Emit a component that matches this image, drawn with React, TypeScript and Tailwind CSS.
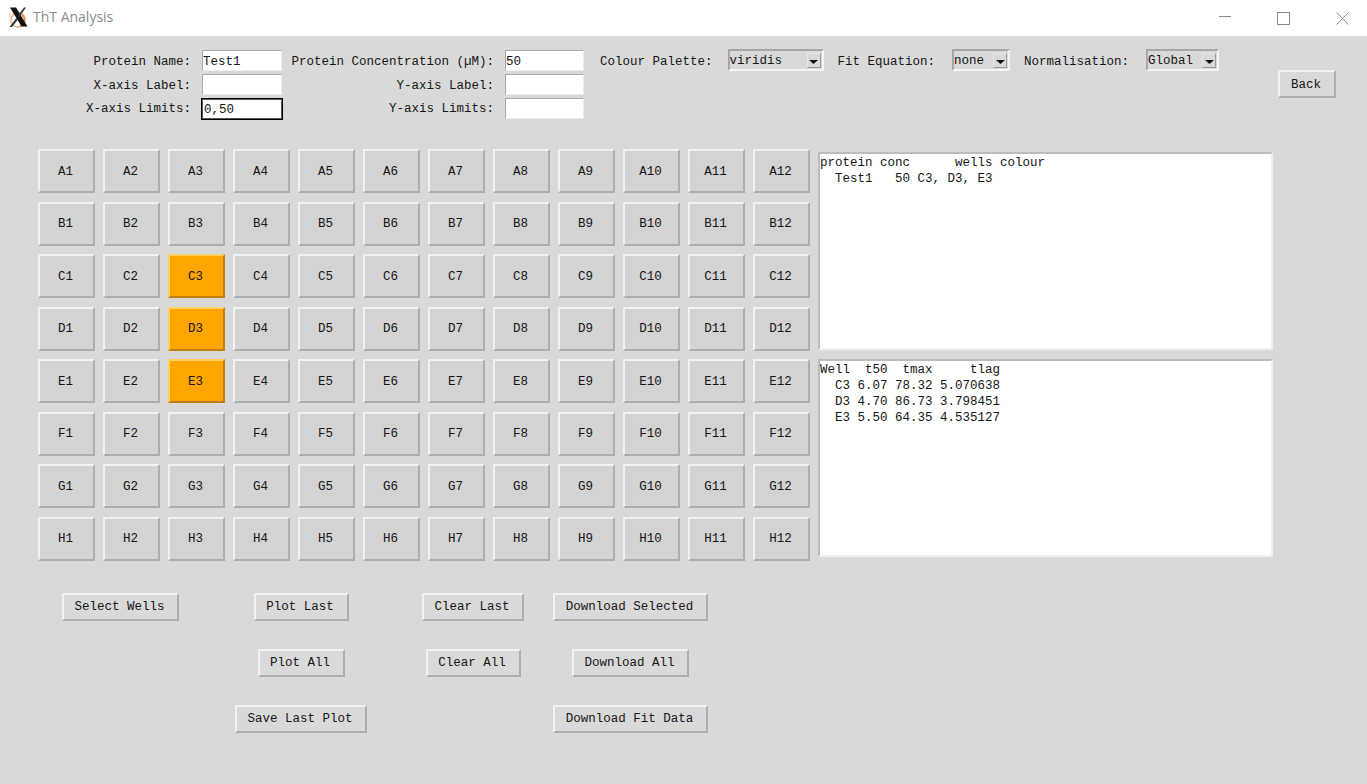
const rows = ["A", "B", "C", "D", "E", "F", "G", "H"];
const cols = [1, 2, 3, 4, 5, 6, 7, 8, 9, 10, 11, 12];
const selected = ["C3", "D3", "E3"];

const raised = "border-2 border-t-[#f2f2f2] border-l-[#f2f2f2] border-b-[#adadad] border-r-[#adadad]";

function Field({ value = "", focused = false, width = "w-[80px]" }: { value?: string; focused?: boolean; width?: string }) {
  return (
    <div
      className={`${width} bg-white border ${
        focused
          ? "h-[20px] pl-[1px] outline outline-1 outline-black border-[#555555] leading-[20px]"
          : "h-[21px] leading-[22px] border-t-[#a8a8a8] border-l-[#a8a8a8] border-b-[#eeeeee] border-r-[#eeeeee]"
      }`}
    >
      {value}
    </div>
  );
}

function Dropdown({ value, width }: { value: string; width: string }) {
  return (
    <div className={`${width} h-[22px] -mt-[1px] flex items-center justify-between pl-[1px] pr-[1px] border-2 border-t-[#a6a6a6] border-l-[#a6a6a6] border-b-[#f4f4f4] border-r-[#f4f4f4]`}>
      <span className="pt-[2px] -ml-[1px]">{value}</span>
      <span className="w-[14px] h-[15px] mt-[1px] flex items-center justify-center bg-[#d9d9d9] border border-t-[#e8e8e8] border-l-[#e8e8e8] border-b-[#9a9a9a] border-r-[#9a9a9a]">
        <svg width="9" height="4" viewBox="0 0 9 4" className="mt-[2px]">
          <path d="M0 0H9L4.5 4Z" fill="#111" />
        </svg>
      </span>
    </div>
  );
}

function ActionButton({ label, width }: { label: string; width: string }) {
  return (
    <button className={`${width} h-[28px] bg-[#d9d9d9] text-center pt-[2px] pr-[2px] ${raised}`}>{label}</button>
  );
}

function Logo() {
  return (
    <svg width="20" height="21" viewBox="0 0 20 21" className="ml-[8px] -mt-[2px]">
      <circle cx="10" cy="13" r="7" fill="none" stroke="#eeb080" strokeWidth="1.6" />
      <path d="M14 7.5C18 11 17 17 12 19.5" fill="none" stroke="#e88a40" strokeWidth="1.8" />
      <path d="M2 6C1 10 2 14 5 18" fill="none" stroke="#f4d0b0" strokeWidth="1.2" />
      <path d="M2 0.5H8L19.5 19.5H13.5Z" fill="#111" />
      <path d="M16 0.5H18L11 10.5L9.8 8.5Z" fill="#333" />
      <path d="M8.3 11L9.6 13L4 20H1.5Z" fill="#333" />
    </svg>
  );
}

function TitleBar() {
  return (
    <div className="h-[36px] bg-white flex items-center">
      <Logo />
      <span className="ml-[5px] pb-[4px] text-[14px] text-[#8c8c8c] font-['Open_Sans',sans-serif]">ThT Analysis</span>
      <div className="ml-auto flex items-center mr-[18px] gap-[46px]">
        <svg width="12" height="12" viewBox="0 0 12 12">
          <path d="M0 4.5H12" stroke="#8a8a8a" strokeWidth="1" />
        </svg>
        <svg width="13" height="13" viewBox="0 0 13 13">
          <rect x="0.5" y="0.5" width="12" height="12" fill="none" stroke="#8a8a8a" />
        </svg>
        <svg width="13" height="13" viewBox="0 0 13 13">
          <path d="M0.5 0.5L12.5 12.5M12.5 0.5L0.5 12.5" stroke="#8a8a8a" strokeWidth="1" />
        </svg>
      </div>
    </div>
  );
}

function FormArea() {
  return (
    <div className="flex h-[113px] pt-[14px]">
      <div className="w-[1278px] flex flex-col gap-[3px]">
        <div className="flex items-center h-[21px] leading-[25px]">
          <span className="w-[191px] h-[21px] text-right">Protein Name:</span>
          <div className="ml-[11px]"><Field value="Test1" /></div>
          <span className="w-[212px] h-[21px] text-right">Protein Concentration (µM):</span>
          <div className="ml-[11px]"><Field value="50" width="w-[79px]" /></div>
          <span className="ml-[16px] h-[21px]">Colour Palette:</span>
          <div className="ml-[15px]"><Dropdown value="viridis" width="w-[96px]" /></div>
          <span className="ml-[14px] h-[21px]">Fit Equation:</span>
          <div className="ml-[17px]"><Dropdown value="none" width="w-[58px]" /></div>
          <span className="ml-[14px] h-[21px]">Normalisation:</span>
          <div className="ml-[17px]"><Dropdown value="Global" width="w-[73px]" /></div>
        </div>
        <div className="flex items-center h-[21px] leading-[25px]">
          <span className="w-[191px] h-[21px] text-right">X-axis Label:</span>
          <div className="ml-[11px]"><Field /></div>
          <span className="w-[212px] h-[21px] text-right">Y-axis Label:</span>
          <div className="ml-[11px]"><Field width="w-[79px]" /></div>
        </div>
        <div className="flex items-center h-[21px] leading-[23px]">
          <span className="w-[191px] h-[21px] text-right">X-axis Limits:</span>
          <div className="ml-[11px]"><Field value="0,50" focused /></div>
          <span className="w-[212px] h-[21px] text-right">Y-axis Limits:</span>
          <div className="ml-[11px]"><Field width="w-[79px]" /></div>
        </div>
      </div>
      <div className="mt-[20px]">
        <ActionButton label="Back" width="w-[58px]" />
      </div>
    </div>
  );
}

function WellPlate() {
  return (
    <div className="grid grid-cols-[repeat(12,57px)] auto-rows-[44px] gap-x-[8px] gap-y-[8.5px]">
      {rows.map((row) =>
        cols.map((col) => {
          const name = `${row}${col}`;
          const active = selected.includes(name);
          return (
            <button
              key={name}
              className={
                active
                  ? "bg-[#ffa500] pt-[2px] pr-[2px] border-2 border-t-[#ffd060] border-l-[#ffd060] border-b-[#c08010] border-r-[#c08010] text-center"
                  : `bg-[#d3d3d3] pt-[2px] pr-[2px] text-center ${raised}`
              }
            >
              {name}
            </button>
          );
        })
      )}
    </div>
  );
}

function TextPanel({ text, height }: { text: string; height: string }) {
  return (
    <pre className={`w-[455px] ${height} bg-white pt-[1px] leading-[16px] font-['Liberation_Mono',monospace] border-2 border-t-[#bcbcbc] border-l-[#bcbcbc] border-b-[#f0f0f0] border-r-[#f0f0f0]`}>
      {text}
    </pre>
  );
}

const wellsTable = `protein conc      wells colour
  Test1   50 C3, D3, E3`;

const fitTable = `Well  t50  tmax     tlag
  C3 6.07 78.32 5.070638
  D3 4.70 86.73 3.798451
  E3 5.50 64.35 4.535127`;

export default function App() {
  return (
    <div className="w-[1367px] h-[784px] bg-[#d9d9d9] overflow-hidden text-[12.5px] text-[#151515] font-['Liberation_Mono',monospace]">
      <TitleBar />
      <FormArea />

      {/* Plate and tables */}
      <div className="flex pl-[38px]">
        <WellPlate />
        <div className="ml-[8px] mt-[3px] flex flex-col gap-[9px]">
          <TextPanel text={wellsTable} height="h-[198px]" />
          <TextPanel text={fitTable} height="h-[198px]" />
        </div>
      </div>

      {/* Action buttons */}
      <div className="flex items-start pl-[62px] mt-[32px]">
        <div className="w-[117px] flex flex-col items-center">
          <ActionButton label="Select Wells" width="w-[117px]" />
        </div>
        <div className="ml-[56px] w-[132px] flex flex-col items-center gap-[28px]">
          <ActionButton label="Plot Last" width="w-[95px]" />
          <ActionButton label="Plot All" width="w-[87px]" />
          <ActionButton label="Save Last Plot" width="w-[132px]" />
        </div>
        <div className="ml-[55px] w-[102px] flex flex-col items-center gap-[28px]">
          <ActionButton label="Clear Last" width="w-[102px]" />
          <ActionButton label="Clear All" width="w-[95px]" />
        </div>
        <div className="ml-[29px] w-[155px] flex flex-col items-center gap-[28px]">
          <ActionButton label="Download Selected" width="w-[155px]" />
          <ActionButton label="Download All" width="w-[117px]" />
          <ActionButton label="Download Fit Data" width="w-[155px]" />
        </div>
      </div>
    </div>
  );
}
